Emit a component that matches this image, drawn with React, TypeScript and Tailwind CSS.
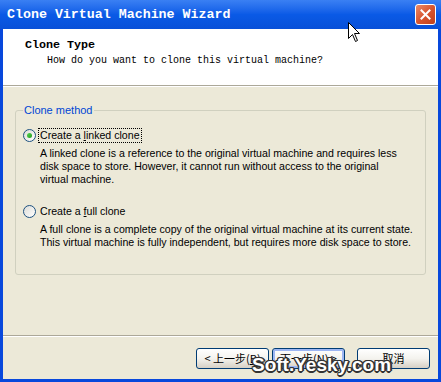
import React from 'react'

const mono = { fontFamily: '"Liberation Mono", "Noto Sans CJK SC", monospace' }

const Radio: React.FC<{ checked?: boolean }> = ({ checked }) => (
  <span className="relative inline-flex h-[13px] w-[13px] shrink-0 items-center justify-center rounded-full border border-[#1c5180] bg-gradient-to-br from-[#dcdcd7] to-white">
    {checked && (
      <span className="h-[5px] w-[5px] rounded-full bg-gradient-to-br from-[#55d551] to-[#1f9b1c]" />
    )}
  </span>
)

const XpButton: React.FC<{ children: React.ReactNode; focused?: boolean }> = ({ children, focused }) => (
  <button
    className={`flex h-[21px] w-[73px] items-center justify-center whitespace-nowrap rounded-[3px] border border-[#003c74] bg-gradient-to-b from-white via-[#f4f3ee] to-[#d6d0c5] text-[11px] text-black ${
      focused ? 'shadow-[inset_0_0_0_2px_#9db6f3]' : ''
    }`}
    style={{ fontFamily: '"Noto Sans CJK SC", "Liberation Sans", sans-serif' }}
  >
    {children}
  </button>
)

const App: React.FC = () => (
  <div
    className="relative flex h-[382px] w-[441px] flex-col overflow-hidden bg-[#0848dc]"
    style={{ fontFamily: '"Liberation Sans", Tahoma, sans-serif' }}
  >
    {/* title bar */}
    <div className="flex h-[29px] shrink-0 items-center justify-between bg-gradient-to-b from-[#3a80f3] via-[#0a5ae6] to-[#0850d8] pl-[7px] pr-[5px]">
      <span className="text-[13.3px] font-bold text-white" style={mono}>
        Clone Virtual Machine Wizard
      </span>
      <span className="flex h-[21px] w-[21px] items-center justify-center rounded-[3px] border border-white bg-gradient-to-br from-[#e98a68] via-[#d8552f] to-[#c0401a]">
        <svg width="11" height="11" viewBox="0 0 11 11">
          <path d="M1.5 1.5 L9.5 9.5 M9.5 1.5 L1.5 9.5" stroke="white" strokeWidth="2" strokeLinecap="square" />
        </svg>
      </span>
    </div>

    <div className="mx-[3px] mb-[3px] flex flex-1 flex-col bg-[#ece9d8]">
      {/* header */}
      <div className="h-[57px] shrink-0 border-b border-[#aca899] bg-white pl-[22px] pt-[9px]">
        <div className="text-[11.7px] font-bold leading-[14px] text-black" style={mono}>
          Clone Type
        </div>
        <div className="mt-[2px] pl-[22px] text-[10px] leading-[14px] text-black" style={mono}>
          How do you want to clone this virtual machine?
        </div>
      </div>
      <div className="h-px bg-white" />

      {/* body */}
      <div className="flex-1 px-[12px] pt-[16px]">
        <fieldset className="h-[172px] rounded-[3px] border border-[#d0d0bf] px-[7px] pt-[11px]">
          <legend className="px-[1px] text-[11px] leading-[14px] text-[#0046d5]">Clone method</legend>
          <div className="flex items-center gap-[2px]">
            <Radio checked />
            <span className="border border-dotted border-black px-[1px] text-[10.6px] leading-[13px] text-black">
              Create a <u>l</u>inked clone
            </span>
          </div>
          <div className="mt-[4px] whitespace-nowrap pl-[17px] text-[10.6px] leading-[13px] text-black">
            A linked clone is a reference to the original virtual machine and requires less
            <br />
            disk space to store. However, it cannot run without access to the original
            <br />
            virtual machine.
          </div>
          <div className="mt-[18px] flex items-center gap-[2px]">
            <Radio />
            <span className="border border-transparent px-[1px] text-[10.6px] leading-[13px] text-black">
              Create a <u>f</u>ull clone
            </span>
          </div>
          <div className="mt-[4px] whitespace-nowrap pl-[17px] text-[10.6px] leading-[13px] text-black">
            A full clone is a complete copy of the original virtual machine at its current state.
            <br />
            This virtual machine is fully independent, but requires more disk space to store.
          </div>
        </fieldset>
      </div>

      {/* footer */}
      <div className="h-px bg-[#aca899]" />
      <div className="h-px bg-white" />
      <div className="flex h-[42px] items-start justify-end gap-[3px] pr-[8px] pt-[11px]">
        <XpButton>&lt; 上一步(<u>B</u>)</XpButton>
        <XpButton focused>下一步(<u>N</u>) &gt;</XpButton>
        <span className="w-[6px]" />
        <XpButton>取消</XpButton>
      </div>
    </div>

    {/* mouse cursor */}
    <svg className="absolute left-[348px] top-[22px]" width="13" height="21" viewBox="0 0 13 21">
      <path d="M0.5 0.5 L0.5 16.5 L4.5 12.5 L7.5 19.5 L9.5 18.5 L6.5 11.5 L11.5 11.5 Z" fill="white" stroke="black" strokeWidth="1" />
    </svg>

    {/* watermark */}
    <span
      className="absolute left-[252px] top-[355px] text-[19px] font-black leading-[20px] text-white"
      style={{
        fontFamily: '"Liberation Sans", sans-serif',
        textShadow:
          '1px 1px 0 #333, -1px -1px 0 #333, 1px -1px 0 #333, -1px 1px 0 #333, 0 1px 0 #333, 0 -1px 0 #333, 1px 0 0 #333, -1px 0 0 #333, 2px 0 0 #333, 0 2px 0 #333',
      }}
    >
      Soft.Yesky.com
    </span>
  </div>
)

export default App
